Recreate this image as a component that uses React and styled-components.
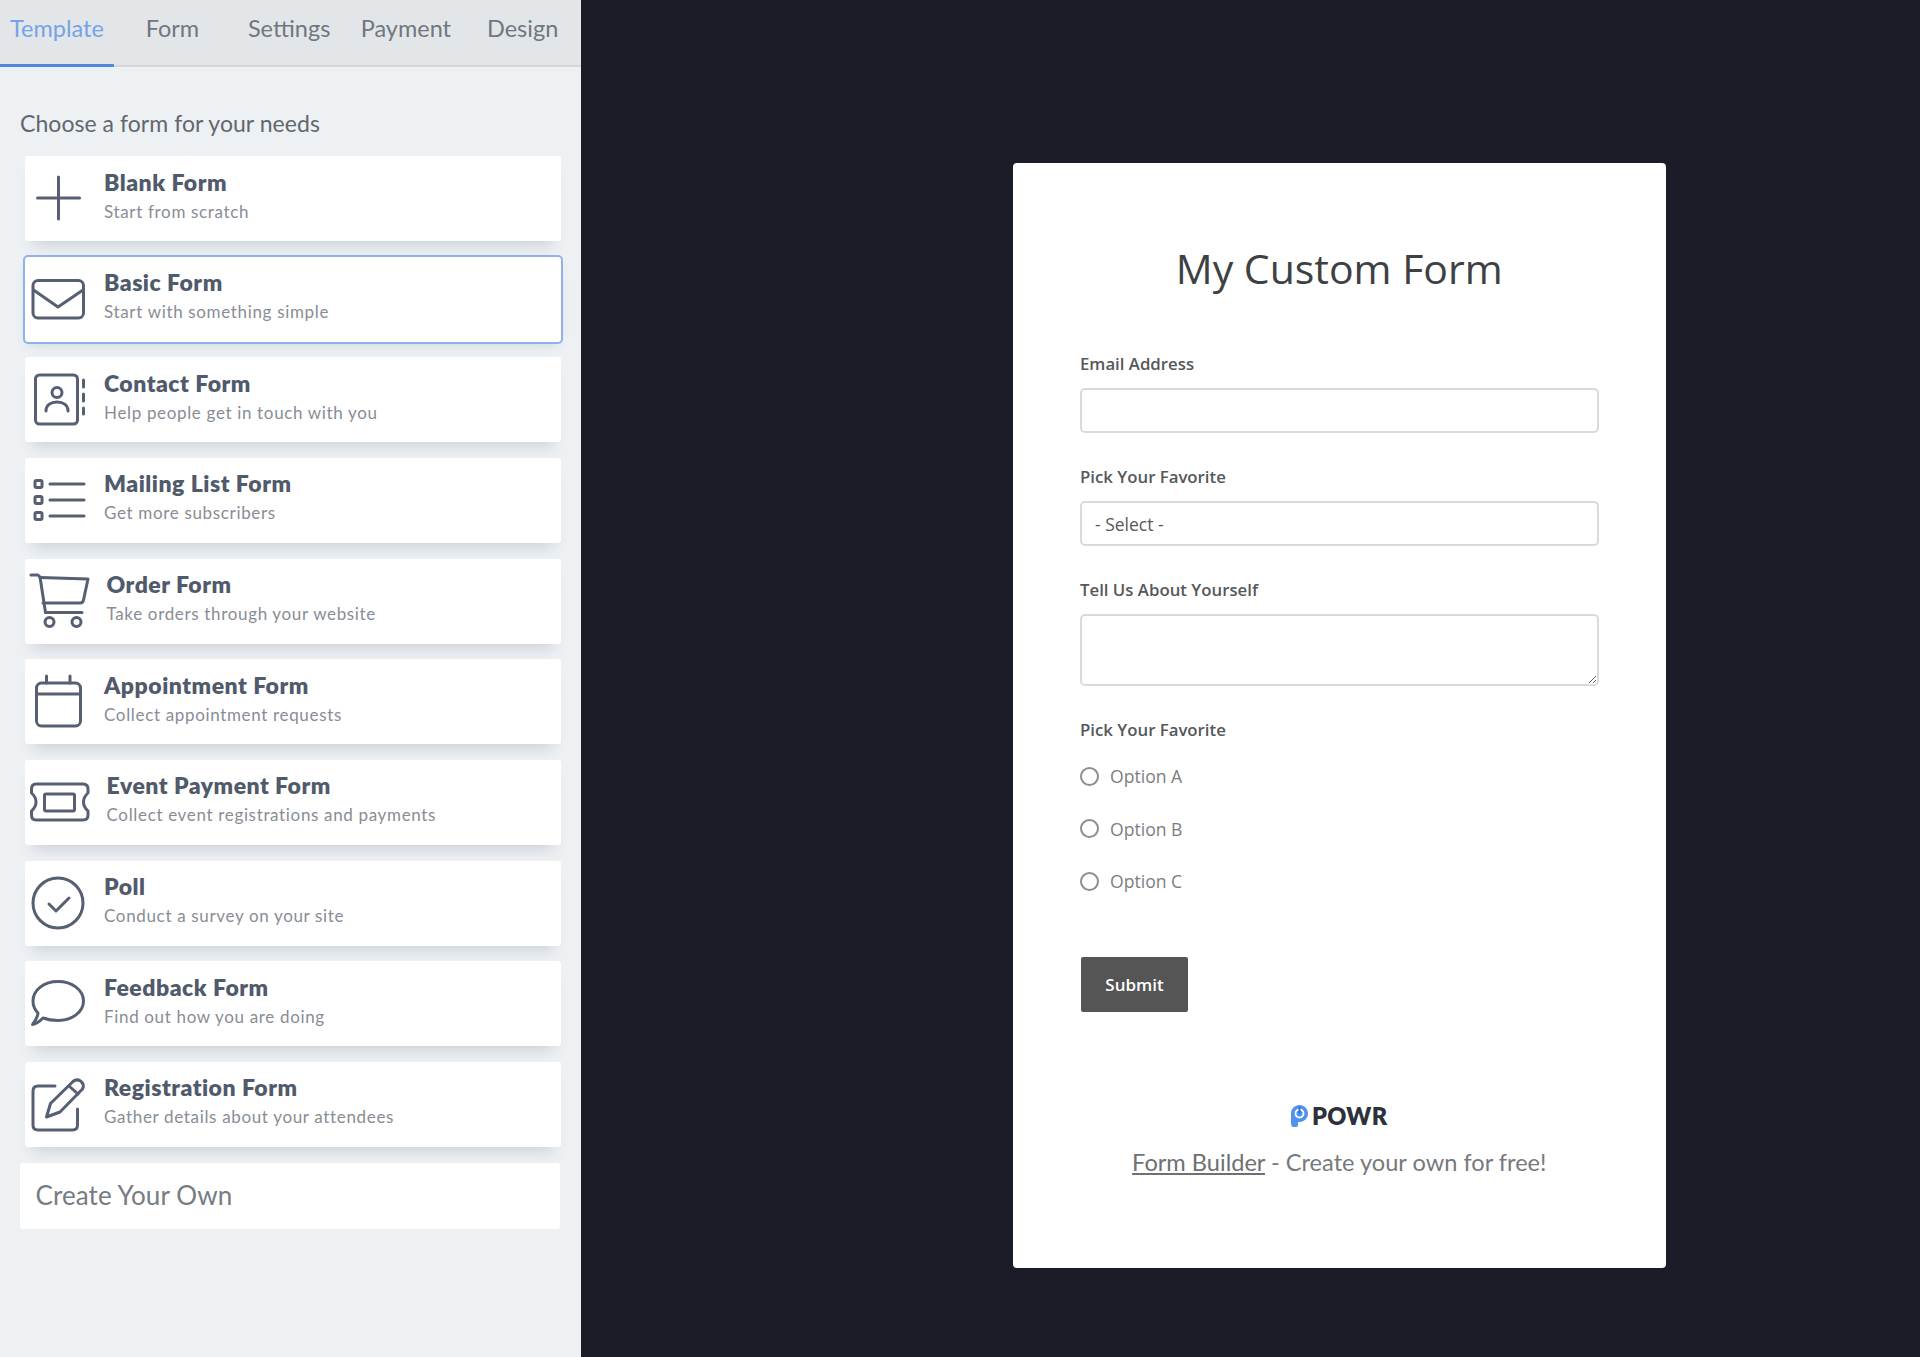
import React from "react";
import styled, { createGlobalStyle } from "styled-components";

const GlobalStyle = createGlobalStyle`
  html, body {
    margin: 0;
    padding: 0;
    background: #1a1c28;
  }
  * {
    box-sizing: border-box;
  }
`;

const Page = styled.div`
  display: flex;
  width: 1920px;
  height: 1357px;
  overflow: hidden;
  background: #1a1c28;
`;

/* left panel */
const Sidebar = styled.aside`
  width: 581px;
  flex-shrink: 0;
  background: #edf1f4;
  font-family: Lato, "Open Sans", sans-serif;
`;

const Tabs = styled.nav`
  display: flex;
  height: 67px;
  background: #e2e6e9;
  border-bottom: 2px solid #d3d7da;
`;

const Tab = styled.div`
  flex: ${(p) => (p.$active ? "0 0 114px" : "1")};
  height: 67px;
  padding-top: 14px;
  text-align: center;
  font-size: 23.5px;
  line-height: 28px;
  color: ${(p) => (p.$active ? "#76a3e6" : "#71777e")};
  border-bottom: ${(p) => (p.$active ? "3px solid #4f88dc" : "none")};
`;

const Heading = styled.h2`
  margin: 42px 0 19px 20px;
  font-size: 23px;
  line-height: 28px;
  font-weight: 400;
  letter-spacing: 0.05px;
  color: #62676d;
`;

const CardList = styled.div`
  display: flex;
  flex-direction: column;
  gap: 15.67px;
  margin: 0 20px 0 24.5px;
`;

const Card = styled.div`
  display: flex;
  height: 85px;
  background: #fff;
  border-radius: 3px;
  box-shadow: ${(p) =>
    p.$selected
      ? "0 0 0 2px #90b2e6, 0 6px 12px -4px rgba(70, 90, 120, 0.2)"
      : "0 12px 14px -8px rgba(70, 80, 100, 0.2)"};
`;

const IconBox = styled.svg`
  width: 66px;
  height: 85px;
  flex-shrink: 0;
  overflow: visible;
  fill: none;
  stroke: #566072;
  stroke-width: 3;
  stroke-linecap: round;
  stroke-linejoin: round;
`;

const CardText = styled.div`
  margin-left: ${(p) => (p.$wide ? "16px" : "13.5px")};
  padding-top: 10.5px;
`;

const CardTitle = styled.div`
  font-size: 23px;
  line-height: 30px;
  font-weight: 800;
  letter-spacing: 0.5px;
  color: #505a6b;
`;

const CardSub = styled.div`
  margin-top: 2px;
  font-size: 17px;
  line-height: 26px;
  letter-spacing: 0.66px;
  color: #888d95;
`;

const CreateOwn = styled.div`
  height: 66px;
  margin: 16px 21px 0 19.5px;
  padding-left: 16px;
  background: #fff;
  border-radius: 3px;
  font-size: 26px;
  line-height: 64px;
  letter-spacing: 0.1px;
  color: #777c82;
`;

/* preview */
const Preview = styled.main`
  flex: 1;
  padding: 163px 0 0 432px;
`;

const FormCard = styled.form`
  width: 652.5px;
  height: 1105px;
  padding: 79px 67px 0;
  background: #fff;
  border-radius: 4px;
  font-family: "Open Sans", sans-serif;
  color: #4d4d4d;
`;

const FormTitle = styled.h1`
  margin: 0 0 57px;
  text-align: center;
  font-size: 41px;
  line-height: 53px;
  font-weight: 400;
  color: #3e4144;
`;

const Field = styled.div`
  margin-bottom: 32px;
`;

const Label = styled.label`
  display: block;
  margin-bottom: ${(p) => (p.$tight ? "8px" : "12px")};
  font-size: 16.8px;
  line-height: 24px;
  font-weight: 600;
  color: #55585b;
`;

const TextInput = styled.input`
  display: block;
  width: 100%;
  height: 45px;
  padding: 0 14px;
  background: #fff;
  border: 2px solid #dadada;
  border-radius: 5px;
  font: inherit;
`;

const Select = styled.select`
  display: block;
  width: 100%;
  height: 45px;
  padding: 0 13px;
  appearance: none;
  background: #fff;
  border: 2px solid #dadada;
  border-radius: 5px;
  font-family: inherit;
  font-size: 17.5px;
  color: #55585b;
`;

const TextArea = styled.textarea`
  display: block;
  width: 100%;
  height: 72px;
  background: #fff;
  border: 2px solid #dadada;
  border-radius: 5px;
`;

const RadioRow = styled.label`
  display: flex;
  align-items: center;
  height: 52.5px;
  font-size: 17.6px;
  color: #7b7e81;
`;

const Radio = styled.input.attrs({ type: "radio" })`
  appearance: none;
  width: 19px;
  height: 19px;
  margin: 0 11px 0 0;
  background: #fff;
  border: 2px solid #8e8e8e;
  border-radius: 50%;
`;

const Submit = styled.button`
  display: block;
  width: 107px;
  height: 55px;
  margin: 49px 0 0 1px;
  background: #555;
  border: none;
  border-radius: 2px;
  font-family: inherit;
  font-size: 17px;
  font-weight: 600;
  color: #fff;
`;

const Brand = styled.div`
  display: flex;
  align-items: center;
  justify-content: center;
  gap: 4px;
  margin-top: 92px;
  height: 24px;
  font-family: Lato, sans-serif;
  font-size: 23.5px;
  font-weight: 800;
  letter-spacing: 0.4px;
  color: #2c323c;
`;

const PoweredBy = styled.p`
  margin: 19px 0 0;
  text-align: center;
  font-family: Lato, sans-serif;
  font-size: 23.6px;
  line-height: 30px;
  color: #77797c;
`;

const BuilderLink = styled.a`
  color: #6e7073;
  text-decoration: underline;
`;

const templates = [
  {
    title: "Blank Form",
    sub: "Start from scratch",
    icon: (
      <>
        <path d="M33.5 21V63" />
        <path d="M12.5 42H54.5" />
      </>
    ),
  },
  {
    title: "Basic Form",
    sub: "Start with something simple",
    selected: true,
    icon: (
      <>
        <rect x="8" y="23.5" width="50.5" height="37.5" rx="5" />
        <path d="M8.5 33L33 50L58 33" />
      </>
    ),
  },
  {
    title: "Contact Form",
    sub: "Help people get in touch with you",
    icon: (
      <>
        <rect x="10.5" y="18" width="42" height="49" rx="4" />
        <circle cx="32" cy="35.5" r="5" />
        <path d="M21 54C21 48 26 45 32 45C38 45 43 48 43 54" />
        <path d="M58.5 23V30M58.5 37V44M58.5 51V57" />
      </>
    ),
  },
  {
    title: "Mailing List Form",
    sub: "Get more subscribers",
    icon: (
      <>
        <rect x="10" y="22.5" width="7" height="7" rx="1.5" />
        <rect x="10" y="38.5" width="7" height="7" rx="1.5" />
        <rect x="10" y="54.5" width="7" height="7" rx="1.5" />
        <path d="M25 26H59M25 42H59M25 58H59" />
      </>
    ),
  },
  {
    title: "Order Form",
    sub: "Take orders through your website",
    wide: true,
    icon: (
      <>
        <path d="M6 16H13L15 18L20.5 53.5" />
        <path d="M15 18.5L63 20L58.5 41Q58 44 55 44H18" />
        <path d="M20.5 53.5H57" />
        <circle cx="24.5" cy="63" r="4.5" />
        <circle cx="51.5" cy="63" r="4.5" />
      </>
    ),
  },
  {
    title: "Appointment Form",
    sub: "Collect appointment requests",
    icon: (
      <>
        <rect x="11.5" y="24" width="44" height="43" rx="5" />
        <path d="M11.5 35H55.5" />
        <path d="M21.5 17V24M45 17V24" />
      </>
    ),
  },
  {
    title: "Event Payment Form",
    sub: "Collect event registrations and payments",
    wide: true,
    icon: (
      <>
        <path d="M11 24H58Q63 24 63 29V33Q58.5 37 58.5 42Q58.5 47 63 51V55Q63 60 58 60H11Q6.5 60 6.5 55V51Q11 47 11 42Q11 37 6.5 33V29Q6.5 24 11 24Z" />
        <rect x="19.5" y="34" width="30" height="17" rx="1.5" />
      </>
    ),
  },
  {
    title: "Poll",
    sub: "Conduct a survey on your site",
    icon: (
      <>
        <circle cx="33" cy="42" r="25" />
        <path d="M24 43L31 50L44 37" />
      </>
    ),
  },
  {
    title: "Feedback Form",
    sub: "Find out how you are doing",
    icon: (
      <path d="M13 52C9.5 48.5 8 45 8 40C8 29 19 20.5 33 20.5C47 20.5 58.5 29 58.5 40C58.5 51 47 59.5 33 59.5C27 59.5 22 58.5 18 57C15 60 11 63 7.5 63.5C10 60 13 56 13 52Z" />
    ),
  },
  {
    title: "Registration Form",
    sub: "Gather details about your attendees",
    icon: (
      <>
        <path d="M30 24H13Q8 24 8 29V63Q8 68 13 68H47.5Q52.5 68 52.5 63V47" />
        <path d="M21.5 55L25.5 41.5L48 19.5Q51.5 16.5 55.5 19Q60 22.5 57.5 27L35 50Z" />
        <path d="M44 24L53 32" />
      </>
    ),
  },
];

const tabNames = ["Template", "Form", "Settings", "Payment", "Design"];

function PowrLogo() {
  return (
    <svg width="17" height="22" viewBox="0 0 17 22">
      <path
        d="M0 8.5C0 3.8 3.8 0 8.5 0S17 3.8 17 8.5S13.2 17 8.5 17H7V20Q7 22 5 22H3Q0 22 0 19Z"
        fill="#4f93ee"
      />
      <circle cx="8.5" cy="8.5" r="4" fill="none" stroke="#fff" strokeWidth="1.8" />
      <path d="M8.5 2.5V7.5" stroke="#2f6fc8" strokeWidth="2" strokeLinecap="round" />
    </svg>
  );
}

export default function App() {
  return (
    <Page>
      <GlobalStyle />
      <Sidebar>
        <Tabs>
          {tabNames.map((name, i) => (
            <Tab key={name} $active={i === 0}>
              {name}
            </Tab>
          ))}
        </Tabs>
        <Heading>Choose a form for your needs</Heading>
        <CardList>
          {templates.map((t) => (
            <Card key={t.title} $selected={t.selected}>
              <IconBox viewBox="0 0 66 85">{t.icon}</IconBox>
              <CardText $wide={t.wide}>
                <CardTitle>{t.title}</CardTitle>
                <CardSub>{t.sub}</CardSub>
              </CardText>
            </Card>
          ))}
        </CardList>
        <CreateOwn>Create Your Own</CreateOwn>
      </Sidebar>

      <Preview>
        <FormCard>
          <FormTitle>My Custom Form</FormTitle>
          <Field>
            <Label>Email Address</Label>
            <TextInput type="text" />
          </Field>
          <Field>
            <Label>Pick Your Favorite</Label>
            <Select>
              <option>- Select -</option>
            </Select>
          </Field>
          <Field>
            <Label>Tell Us About Yourself</Label>
            <TextArea />
          </Field>
          <Label $tight>Pick Your Favorite</Label>
          <RadioRow>
            <Radio name="fav" />
            Option A
          </RadioRow>
          <RadioRow>
            <Radio name="fav" />
            Option B
          </RadioRow>
          <RadioRow>
            <Radio name="fav" />
            Option C
          </RadioRow>
          <Submit type="button">Submit</Submit>
          <Brand>
            <PowrLogo />
            POWR
          </Brand>
          <PoweredBy>
            <BuilderLink>Form Builder</BuilderLink> - Create your own for free!
          </PoweredBy>
        </FormCard>
      </Preview>
    </Page>
  );
}
